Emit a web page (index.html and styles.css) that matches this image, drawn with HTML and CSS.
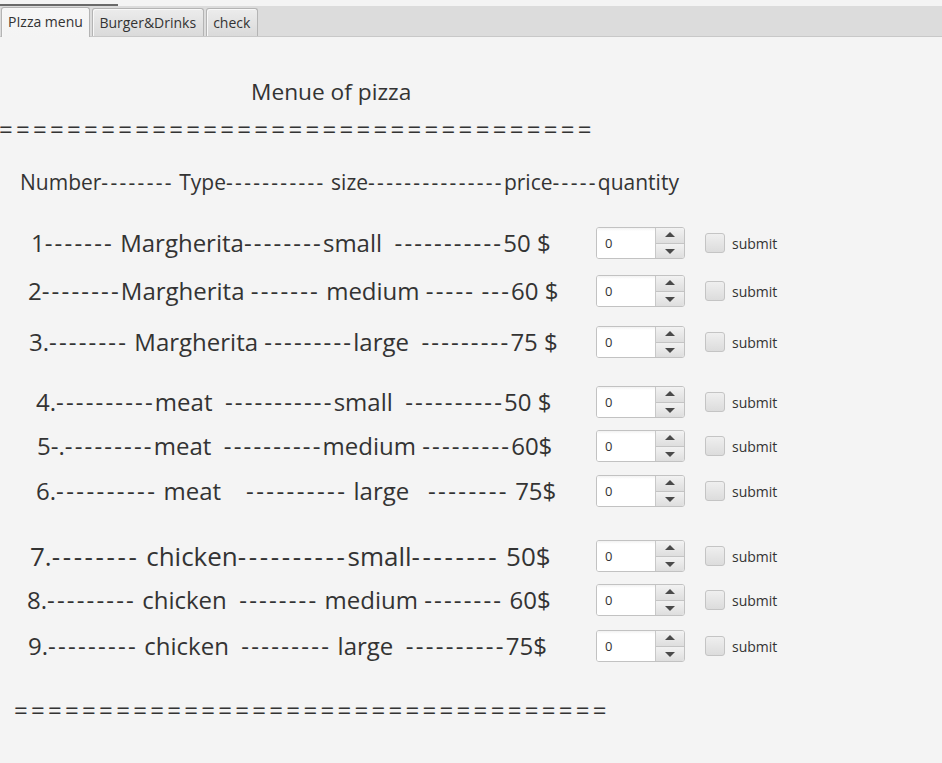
FILE: index.html
```html
<!DOCTYPE html>
<html>
<head>
<meta charset="utf-8">
<link rel="stylesheet" href="styles.css">
</head>
<body>
<div class="topline"></div>
<div class="tabbar">
  <div class="tab active">PIzza menu</div>
  <div class="tab">Burger&amp;Drinks</div>
  <div class="tab">check</div>
</div>
<main class="content">
  <div class="title">Menue of pizza</div>
  <div class="rule rule-top">===================================</div>
  <div class="header">Number<span class="d">--------</span> Type<span class="d">-----------</span> size<span class="d">---------------</span>price<span class="d">-----</span>quantity</div>
  <div class="rows">
    <div class="row r1"><div class="label"><span class="txt t1">1<span class="d">-------</span> Margherita<span class="d">--------</span>small  <span class="d">-----------</span>50 $</span></div><div class="spinner"><div class="field">0</div><div class="btns"><div class="btn up"></div><div class="btn down"></div></div></div><div class="check"><span class="box"></span><span class="ctext">submit</span></div></div>
    <div class="row r2"><div class="label"><span class="txt t2">2<span class="d">--------</span>Margherita <span class="d">-------</span> medium <span class="d">-----</span> <span class="d">---</span>60 $</span></div><div class="spinner"><div class="field">0</div><div class="btns"><div class="btn up"></div><div class="btn down"></div></div></div><div class="check"><span class="box"></span><span class="ctext">submit</span></div></div>
    <div class="row r3"><div class="label"><span class="txt t3">3.<span class="d">--------</span> Margherita <span class="d">---------</span>large  <span class="d">---------</span>75 $</span></div><div class="spinner"><div class="field">0</div><div class="btns"><div class="btn up"></div><div class="btn down"></div></div></div><div class="check"><span class="box"></span><span class="ctext">submit</span></div></div>
    <div class="row r4"><div class="label"><span class="txt t4">4.<span class="d">----------</span>meat  <span class="d">-----------</span>small  <span class="d">----------</span>50 $</span></div><div class="spinner"><div class="field">0</div><div class="btns"><div class="btn up"></div><div class="btn down"></div></div></div><div class="check"><span class="box"></span><span class="ctext">submit</span></div></div>
    <div class="row r5"><div class="label"><span class="txt t5">5-.<span class="d">---------</span>meat  <span class="d">----------</span>medium <span class="d">---------</span>60$</span></div><div class="spinner"><div class="field">0</div><div class="btns"><div class="btn up"></div><div class="btn down"></div></div></div><div class="check"><span class="box"></span><span class="ctext">submit</span></div></div>
    <div class="row r6"><div class="label"><span class="txt t6">6.<span class="d">----------</span> meat    <span class="d">----------</span> large   <span class="d">--------</span> 75$</span></div><div class="spinner"><div class="field">0</div><div class="btns"><div class="btn up"></div><div class="btn down"></div></div></div><div class="check"><span class="box"></span><span class="ctext">submit</span></div></div>
    <div class="row r7"><div class="label"><span class="txt t7">7.<span class="d">--------</span> chicken<span class="d">----------</span>small<span class="d">--------</span> 50$</span></div><div class="spinner"><div class="field">0</div><div class="btns"><div class="btn up"></div><div class="btn down"></div></div></div><div class="check"><span class="box"></span><span class="ctext">submit</span></div></div>
    <div class="row r8"><div class="label"><span class="txt t8">8.<span class="d">---------</span> chicken  <span class="d">--------</span> medium <span class="d">--------</span> 60$</span></div><div class="spinner"><div class="field">0</div><div class="btns"><div class="btn up"></div><div class="btn down"></div></div></div><div class="check"><span class="box"></span><span class="ctext">submit</span></div></div>
    <div class="row r9"><div class="label"><span class="txt t9">9.<span class="d">---------</span> chicken  <span class="d">---------</span> large  <span class="d">----------</span>75$</span></div><div class="spinner"><div class="field">0</div><div class="btns"><div class="btn up"></div><div class="btn down"></div></div></div><div class="check"><span class="box"></span><span class="ctext">submit</span></div></div>
  </div>
  <div class="rule rule-bottom">===================================</div>
</main>
</body>
</html>
```
FILE: styles.css
```css
html, body {
  margin: 0;
  padding: 0;
  background: #f4f4f4;
  font-family: "Open Sans", "Noto Sans", sans-serif;
  color: #333333;
  overflow: hidden;
}
.topline {
  height: 6px;
  background: #f4f4f4;
  position: relative;
}
.topline::before {
  content: "";
  position: absolute;
  left: 0;
  top: 4px;
  width: 118px;
  height: 2px;
  background: #6a6a6a;
}
.tabbar {
  height: 31px;
  background: #dcdcdc;
  border-bottom: 1px solid #c8c8c8;
  display: flex;
  align-items: flex-end;
  padding-left: 1px;
  gap: 2px;
  box-sizing: border-box;
}
.tab {
  height: 28px;
  box-sizing: border-box;
  border: 1px solid #b4b4b4;
  border-bottom: none;
  border-radius: 3px 3px 0 0;
  background: linear-gradient(#ececec, #dadada);
  font-size: 14px;
  line-height: 27px;
  padding: 0 6.5px;
  color: #333;
  box-shadow: inset 1px 1px 0 #f8f8f8;
}
.tab.active {
  height: 30px;
  background: linear-gradient(#f6f6f6, #f4f4f4);
  margin-bottom: -1px;
  line-height: 28px;
  padding: 0 6px;
}
.content {
  display: flex;
  flex-direction: column;
}
.title {
  margin-top: 41px;
  margin-left: 251px;
  font-size: 22.7px;
  line-height: 28px;
  height: 28px;
}
.rule {
  font-size: 24px;
  line-height: 24px;
  height: 24px;
  white-space: pre;
  letter-spacing: 3.3px;
  color: #333;
}
.rule-top {
  margin-top: 11px;
  margin-left: -1px;
}
.header {
  margin-top: 27px;
  margin-left: 20px;
  font-size: 21px;
  line-height: 28px;
  height: 28px;
  white-space: pre;
}
.header .d {
  letter-spacing: 2.3px;
}
.rows {
  display: flex;
  flex-direction: column;
  margin-top: 31px;
}
.row {
  display: flex;
  align-items: center;
  height: 32px;
}
.r2 { margin-top: 16px; }
.r3 { margin-top: 19px; }
.r4 { margin-top: 28px; }
.r5 { margin-top: 12px; }
.r6 { margin-top: 13px; }
.r7 { margin-top: 33px; }
.r8 { margin-top: 12px; }
.r9 { margin-top: 14px; }
.label {
  flex: 0 0 596px;
  white-space: pre;
  font-size: 24px;
  line-height: 32px;
}
.label .d {
  letter-spacing: 0.09em;
}
.label .t6 .d,
.label .t7 .d {
  letter-spacing: 0.1em;
}
.label .t9 .d {
  letter-spacing: 0.095em;
}
.t1 { margin-left: 31px; }
.t2 { margin-left: 28px; }
.t3 { margin-left: 29px; }
.t4 { margin-left: 36px; }
.t5 { margin-left: 37px; }
.t6 { margin-left: 36px; }
.t7 { margin-left: 30px; font-size: 26px; }
.t8 { margin-left: 27px; }
.t9 { margin-left: 28px; }
.spinner {
  width: 89px;
  height: 32px;
  box-sizing: border-box;
  border: 1px solid #c2c2c2;
  border-radius: 3px;
  display: flex;
  background: #fff;
  overflow: hidden;
}
.field {
  flex: 1;
  font-size: 13px;
  line-height: 30px;
  padding-left: 8px;
  color: #333;
  background: linear-gradient(#f2f2f2, #ffffff 3px);
}
.btns {
  width: 28px;
  display: flex;
  flex-direction: column;
  border-left: 1px solid #c8c8c8;
}
.btn {
  flex: 1;
  background: linear-gradient(#f2f2f2, #dedede);
  position: relative;
}
.btn.up { border-bottom: 1px solid #c4c4c4; }
.btn::after {
  content: "";
  position: absolute;
  left: 50%;
  top: 50%;
  margin-left: -5px;
  border-left: 5px solid transparent;
  border-right: 5px solid transparent;
}
.btn.up::after {
  margin-top: -3px;
  border-bottom: 5px solid #4a4a4a;
}
.btn.down::after {
  margin-top: -2px;
  border-top: 5px solid #4a4a4a;
}
.check {
  display: flex;
  align-items: center;
  margin-left: 20px;
  gap: 7px;
}
.box {
  width: 20px;
  height: 20px;
  box-sizing: border-box;
  border: 1px solid #c4c4c4;
  border-radius: 3px;
  background: linear-gradient(#efefef, #dcdcdc);
}
.ctext {
  font-size: 14px;
  color: #333;
}
.rule-bottom {
  margin-top: 36px;
  margin-left: 14px;
}
```
